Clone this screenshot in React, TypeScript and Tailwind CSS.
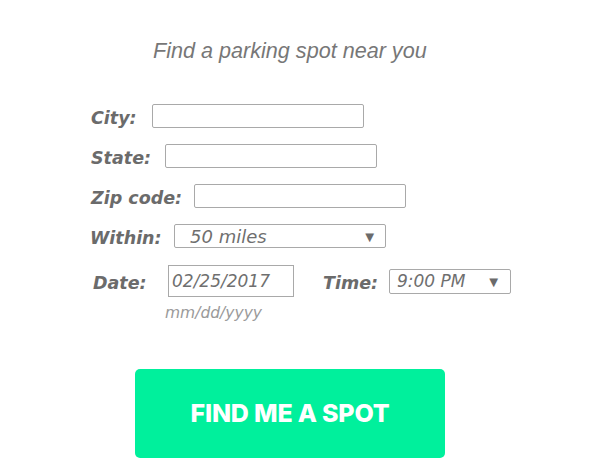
import React from 'react';

const labelCls =
  "font-['DejaVu_Sans',Verdana,sans-serif] font-bold italic text-[17.5px] text-[#6b6b6b] leading-none pt-[6px]";
const boxCls = 'h-[24px] w-[212px] border border-[#a9a9a9] rounded-[2px] bg-white outline-none';

const Row = ({ label, width }: { label: string; width: string }) => (
  <div className="flex items-center h-[24px]">
    <span className={`${labelCls} ${width}`}>{label}</span>
    <input type="text" className={boxCls} />
  </div>
);

const Arrow = ({ right }: { right: string }) => (
  <span className={`absolute ${right} top-[3px] text-[15px] leading-[18px] text-[#6b6b6b] pointer-events-none`}>▼</span>
);

const App = () => {
  return (
    <div className="w-[593px] h-[474px] bg-white relative overflow-hidden">
      <h1 className="pt-[39px] pl-[153px] text-[21.6px] leading-[24px] italic text-[#777777] font-['Liberation_Sans',Arial,sans-serif]">
        Find a parking spot near you
      </h1>

      <form className="pl-[91px] mt-[41px] flex flex-col gap-[16px]" onSubmit={(e) => e.preventDefault()}>
        <Row label="City:" width="w-[61px]" />
        <Row label="State:" width="w-[74px]" />
        <Row label="Zip code:" width="w-[103px]" />

        <div className="flex items-center h-[24px]">
          <span className={`${labelCls} -ml-px w-[84px]`}>Within:</span>
          <div className="relative">
            <select
              defaultValue="50"
              className={`${boxCls} appearance-none pl-[15px] pt-[2px] text-[18px] leading-none italic text-[#6f6f6f] font-['DejaVu_Sans',Verdana,sans-serif]`}
            >
              <option value="50">50 miles</option>
              <option value="25">25 miles</option>
              <option value="10">10 miles</option>
            </select>
            <Arrow right="right-[9px]" />
          </div>
        </div>

        <div className="flex items-start mt-px">
          <div className="flex flex-col">
            <div className="flex items-center h-[32px]">
              <span className={`${labelCls} ml-[2px] w-[75px]`}>Date:</span>
              <input
                type="text"
                defaultValue="02/25/2017"
                className="h-[32px] w-[126px] border border-[#a9a9a9] bg-white outline-none pl-[3px] text-[17px] italic text-[#6f6f6f] font-['DejaVu_Sans',Verdana,sans-serif]"
              />
            </div>
            <span className="ml-[74px] mt-[6px] text-[15.5px] leading-[20px] italic text-[#9a9a9a] font-['DejaVu_Sans',Verdana,sans-serif]">
              mm/dd/yyyy
            </span>
          </div>
          <div className="flex items-center h-[32px] ml-[29px]">
            <span className={`${labelCls} w-[66px]`}>Time:</span>
            <div className="relative">
              <select
                defaultValue="21"
                className="h-[25px] w-[122px] border border-[#a9a9a9] rounded-[2px] bg-white outline-none appearance-none pl-[7px] text-[17px] leading-none italic text-[#6f6f6f] font-['DejaVu_Sans',Verdana,sans-serif]"
              >
                <option value="21">9:00 PM</option>
                <option value="22">10:00 PM</option>
              </select>
              <Arrow right="right-[10px]" />
            </div>
          </div>
        </div>

        <button
          type="submit"
          className="ml-[44px] mt-[30px] w-[310px] h-[89px] rounded-[5px] bg-[#00f09c] text-white text-[25px] font-extrabold tracking-[-0.2px] font-['Inter',sans-serif]"
        >
          FIND ME A SPOT
        </button>
      </form>
    </div>
  );
};

export default App;
